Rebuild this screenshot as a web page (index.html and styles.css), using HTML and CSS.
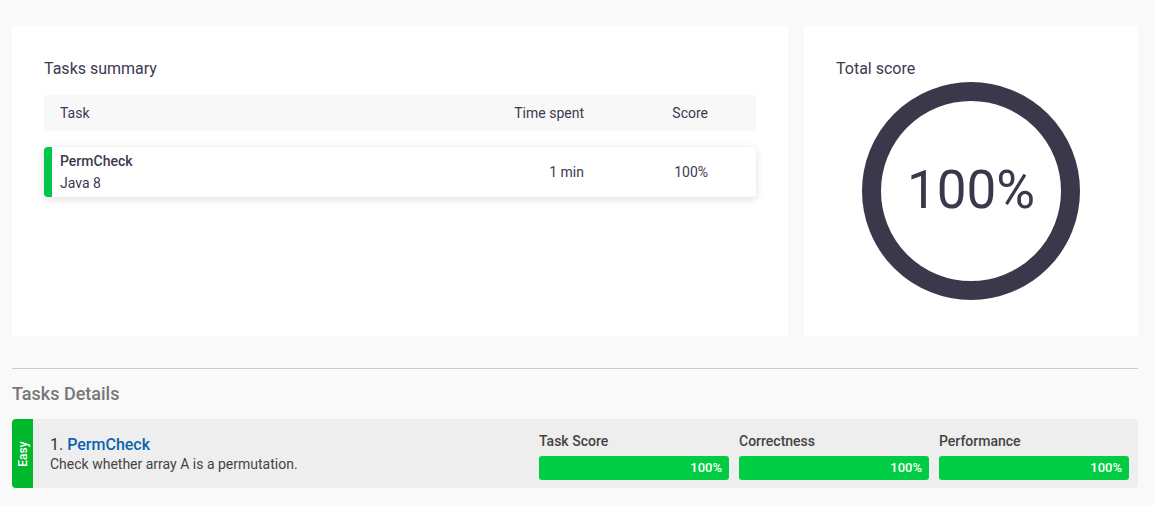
FILE: index.html
```html
<!DOCTYPE html>
<html>
<head>
<meta charset="utf-8">
<link rel="stylesheet" href="styles.css">
</head>
<body>
<div class="top">
  <section class="card summary">
    <h2 class="card-title">Tasks summary</h2>
    <div class="thead">
      <div class="c-task">Task</div>
      <div class="c-time">Time spent</div>
      <div class="c-score">Score</div>
    </div>
    <div class="trow">
      <div class="c-task">
        <div class="task-name">PermCheck</div>
        <div class="task-lang">Java 8</div>
      </div>
      <div class="c-time">1 min</div>
      <div class="c-score">100%</div>
    </div>
  </section>
  <section class="card total">
    <h2 class="card-title">Total score</h2>
    <div class="ring-wrap">
      <div class="ring">100%</div>
    </div>
  </section>
</div>
<hr class="sep">
<h2 class="details-title">Tasks Details</h2>
<div class="detail">
  <div class="badge"><span>Easy</span></div>
  <div class="info">
    <div class="info-title">1. <a class="task-link">PermCheck</a></div>
    <div class="info-desc">Check whether array A is a permutation.</div>
  </div>
  <div class="scores">
    <div class="metric">
      <div class="metric-label">Task Score</div>
      <div class="bar">100%</div>
    </div>
    <div class="metric">
      <div class="metric-label">Correctness</div>
      <div class="bar">100%</div>
    </div>
    <div class="metric">
      <div class="metric-label">Performance</div>
      <div class="bar">100%</div>
    </div>
  </div>
</div>
</body>
</html>
```
FILE: styles.css
```css
* { box-sizing: border-box; }
html, body { margin: 0; padding: 0; }
body {
  background: #f9f9f9;
  font-family: Roboto, "Liberation Sans", sans-serif;
  color: #3c3a4e;
  padding: 26px 16px 0 12px;
}
.top {
  display: flex;
  gap: 16px;
  height: 310px;
}
.card {
  background: #fff;
  padding: 33px 32px 0 32px;
}
.summary { width: 776px; }
.total { flex: 1; }
.card-title {
  margin: 0;
  font-size: 16px;
  font-weight: 400;
  line-height: 20px;
  color: #3c3a4e;
}
.thead, .trow {
  display: grid;
  grid-template-columns: 1fr 140px 124px 48px;
  align-items: center;
  font-size: 14px;
}
.thead::after, .trow::after { content: ""; }
.thead {
  margin-top: 16px;
  height: 36px;
  background: #f8f8f8;
  padding-left: 16px;
}
.c-time, .c-score { text-align: right; }
.trow {
  margin-top: 16px;
  height: 50px;
  background: #fff;
  border-left: 8px solid #00c64a;
  border-radius: 4px;
  box-shadow: 0 2px 8px rgba(0, 0, 0, 0.13);
  padding-left: 8px;
}
.task-name { font-weight: 500; line-height: 21px; }
.task-lang { line-height: 22px; }
.ring-wrap {
  display: flex;
  justify-content: center;
  margin-top: 3px;
}
.ring {
  width: 218px;
  height: 218px;
  border: 19px solid #3b384c;
  border-radius: 50%;
  display: flex;
  align-items: center;
  justify-content: center;
  font-size: 53px;
  font-weight: 400;
  color: #3b384c;
  padding-bottom: 2px;
}
.sep {
  margin: 32px 0 0 0;
  border: 0;
  border-top: 1px solid #cccccc;
  height: 0;
}
.details-title {
  margin: 14px 0 0 0;
  font-size: 18px;
  line-height: 22px;
  font-weight: 500;
  color: #777;
}
.detail {
  margin-top: 14px;
  display: flex;
  background: #eeeeee;
  height: 69px;
  border-radius: 4px;
  padding-right: 9px;
}
.badge {
  width: 21px;
  background: #00b82b;
  border-radius: 4px 0 0 4px;
  display: flex;
  align-items: center;
  justify-content: center;
}
.badge span {
  transform: rotate(-90deg);
  color: #fff;
  font-size: 12px;
  font-weight: 500;
  white-space: nowrap;
}
.info {
  flex: 1;
  padding: 16px 0 0 17px;
}
.info-title {
  font-size: 16px;
  line-height: 20px;
  color: #333;
}
.task-link {
  color: #0b63ae;
  font-weight: 500;
}
.info-desc {
  font-size: 14px;
  line-height: 18px;
  color: #444;
}
.scores {
  display: grid;
  grid-template-columns: repeat(3, 190px);
  gap: 10px;
  padding-top: 13px;
}
.metric-label {
  font-size: 14px;
  font-weight: 500;
  line-height: 18px;
  color: #444;
}
.bar {
  margin-top: 6px;
  height: 24px;
  background: #00cc44;
  border-radius: 3px;
  color: #fff;
  font-size: 13px;
  font-weight: 500;
  text-align: right;
  padding-right: 7px;
  line-height: 24px;
}
```
